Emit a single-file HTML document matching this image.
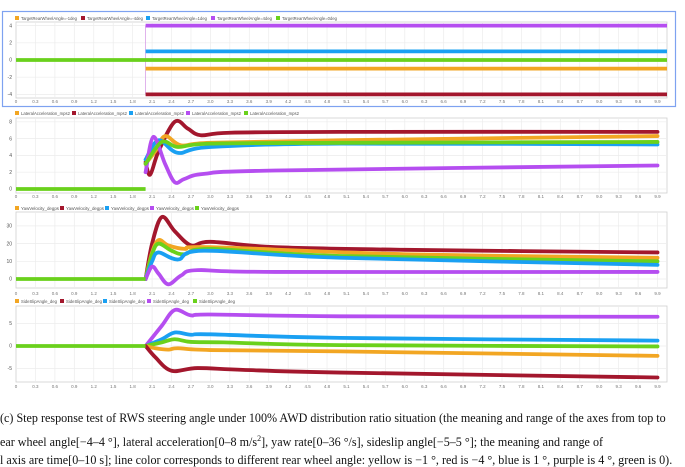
<!DOCTYPE html>
<html><head><meta charset="utf-8">
<style>
body{margin:0;background:#fff;width:685px;height:465px;overflow:hidden;position:relative;font-family:"Liberation Sans",sans-serif}
svg{position:absolute;left:0;top:0}
.cap{position:absolute;left:0;font-family:"Liberation Serif",serif;font-size:12.1px;color:#111;white-space:nowrap;line-height:14px}
</style></head><body>
<svg id="s" width="685" height="400" xmlns="http://www.w3.org/2000/svg">
<rect x="0" y="0" width="685" height="400" fill="#fff"/>
<rect x="2.5" y="11.5" width="673" height="95" fill="none" stroke="#7ea2f0" stroke-width="1.2"/>
<g font-size="4.2" fill="#555" lengthAdjust="spacingAndGlyphs">
<rect x="15" y="16" width="4" height="4" fill="#f2a623"/><text x="21" y="19.8" textLength="56" lengthAdjust="spacingAndGlyphs">TargetRearWheelAngle=-1deg</text>
<rect x="81" y="16" width="4" height="4" fill="#a3172d"/><text x="87" y="19.8" textLength="56" lengthAdjust="spacingAndGlyphs">TargetRearWheelAngle=-4deg</text>
<rect x="146" y="16" width="4" height="4" fill="#1aa0f2"/><text x="152" y="19.8" textLength="55" lengthAdjust="spacingAndGlyphs">TargetRearWheelAngle=1deg</text>
<rect x="211" y="16" width="4" height="4" fill="#b54ef0"/><text x="217" y="19.8" textLength="55" lengthAdjust="spacingAndGlyphs">TargetRearWheelAngle=4deg</text>
<rect x="276" y="16" width="4" height="4" fill="#6ad11c"/><text x="282" y="19.8" textLength="55" lengthAdjust="spacingAndGlyphs">TargetRearWheelAngle=0deg</text>
<rect x="15" y="111" width="4" height="4" fill="#f2a623"/><text x="21" y="114.8" textLength="49" lengthAdjust="spacingAndGlyphs">LateralAcceleration_mps2</text>
<rect x="72" y="111" width="4" height="4" fill="#a3172d"/><text x="78" y="114.8" textLength="49" lengthAdjust="spacingAndGlyphs">LateralAcceleration_mps2</text>
<rect x="129" y="111" width="4" height="4" fill="#1aa0f2"/><text x="135" y="114.8" textLength="49" lengthAdjust="spacingAndGlyphs">LateralAcceleration_mps2</text>
<rect x="186" y="111" width="4" height="4" fill="#b54ef0"/><text x="192" y="114.8" textLength="49" lengthAdjust="spacingAndGlyphs">LateralAcceleration_mps2</text>
<rect x="244" y="111" width="4" height="4" fill="#6ad11c"/><text x="250" y="114.8" textLength="49" lengthAdjust="spacingAndGlyphs">LateralAcceleration_mps2</text>
<rect x="15" y="206" width="4" height="4" fill="#f2a623"/><text x="21" y="209.8" textLength="38" lengthAdjust="spacingAndGlyphs">YawVelocity_degps</text>
<rect x="60" y="206" width="4" height="4" fill="#a3172d"/><text x="66" y="209.8" textLength="38" lengthAdjust="spacingAndGlyphs">YawVelocity_degps</text>
<rect x="105" y="206" width="4" height="4" fill="#1aa0f2"/><text x="111" y="209.8" textLength="38" lengthAdjust="spacingAndGlyphs">YawVelocity_degps</text>
<rect x="150" y="206" width="4" height="4" fill="#b54ef0"/><text x="156" y="209.8" textLength="38" lengthAdjust="spacingAndGlyphs">YawVelocity_degps</text>
<rect x="195" y="206" width="4" height="4" fill="#6ad11c"/><text x="201" y="209.8" textLength="38" lengthAdjust="spacingAndGlyphs">YawVelocity_degps</text>
<rect x="15" y="299" width="4" height="4" fill="#f2a623"/><text x="21" y="302.8" textLength="36" lengthAdjust="spacingAndGlyphs">SideSlipAngle_deg</text>
<rect x="60" y="299" width="4" height="4" fill="#a3172d"/><text x="66" y="302.8" textLength="36" lengthAdjust="spacingAndGlyphs">SideSlipAngle_deg</text>
<rect x="103" y="299" width="4" height="4" fill="#1aa0f2"/><text x="109" y="302.8" textLength="36" lengthAdjust="spacingAndGlyphs">SideSlipAngle_deg</text>
<rect x="147" y="299" width="4" height="4" fill="#b54ef0"/><text x="153" y="302.8" textLength="36" lengthAdjust="spacingAndGlyphs">SideSlipAngle_deg</text>
<rect x="193" y="299" width="4" height="4" fill="#6ad11c"/><text x="199" y="302.8" textLength="36" lengthAdjust="spacingAndGlyphs">SideSlipAngle_deg</text>
</g>
<g id="dyn"></g>
</svg>
<div class="cap" style="top:411px">(c) Step response test of RWS steering angle under 100% AWD distribution ratio situation (the meaning and range of the axes from top to</div>
<div class="cap" style="top:435px">ear wheel angle[−4–4 °], lateral acceleration[0–8 m/s<sup style="font-size:8px;line-height:0">2</sup>], yaw rate[0–36 °/s], sideslip angle[−5–5 °]; the meaning and range of</div>
<div class="cap" style="top:453px">l axis are time[0–10 s]; line color corresponds to different rear wheel angle: yellow is −1 °, red is −4 °, blue is 1 °, purple is 4 °, green is 0).</div>
<script>
var NS="http://www.w3.org/2000/svg",g=document.getElementById("dyn");
function el(n,a,t){var e=document.createElementNS(NS,n);for(var k in a)e.setAttribute(k,a[k]);if(t!=null)e.textContent=t;g.appendChild(e);return e;}
var L=16,R=667;function X(t){return L+t*64.8;}
var C={o:"#f2a623",r:"#a3172d",b:"#1aa0f2",p:"#b54ef0",g:"#6ad11c"};
var W=3.8;
var P=[
 {top:22,bot:98,lab:103,z:60,k:8.6,ticks:[4,2,0,-2,-4]},
 {top:118,bot:193,lab:198,z:189,k:8.4,ticks:[8,6,4,2,0]},
 {top:212,bot:288,lab:295,z:279,k:1.77,ticks:[30,20,10,0]},
 {top:306,bot:382,lab:388,z:346,k:4.5,ticks:[5,0,-5]}];
P.forEach(function(p){
 el("rect",{x:L,y:p.top,width:R-L,height:p.bot-p.top,fill:"#fff",stroke:"#cfcfcf","stroke-width":0.8});
 for(var i=1;i<34;i++){var x=X(i*0.3);el("line",{x1:x,x2:x,y1:p.top,y2:p.bot,stroke:"#ececec","stroke-width":0.7});}
 p.ticks.forEach(function(v){var y=p.z-p.k*v;el("line",{x1:L,x2:R,y1:y,y2:y,stroke:"#ececec","stroke-width":0.7});
  el("text",{x:12,y:y+1.7,"font-size":5,fill:"#555","text-anchor":"end"},String(v));});
 for(var i=0;i<34;i++){var t=(i*0.3).toFixed(1);if(i==0)t="0";el("text",{x:X(i*0.3),y:p.lab,"font-size":4.5,fill:"#777","text-anchor":"middle"},t);}
});
function curve(p,pts,c,w){var d="";
 var q=pts.map(function(a){return [X(a[0]),p.z-p.k*a[1]];});
 d="M"+q[0][0]+","+q[0][1];
 for(var i=0;i<q.length-1;i++){var p0=q[Math.max(i-1,0)],p1=q[i],p2=q[i+1],p3=q[Math.min(i+2,q.length-1)];
  var c1x=p1[0]+(p2[0]-p0[0])/6,c1y=p1[1]+(p2[1]-p0[1])/6,c2x=p2[0]-(p3[0]-p1[0])/6,c2y=p2[1]-(p3[1]-p1[1])/6;
  d+=" C"+c1x+","+c1y+" "+c2x+","+c2y+" "+p2[0]+","+p2[1];}
 el("path",{d:d,fill:"none",stroke:c,"stroke-width":w||W,"stroke-linejoin":"round","stroke-linecap":"round"});}
var p=P[0];
el("line",{x1:X(2),x2:X(2),y1:p.z-p.k*4,y2:p.z+p.k*4,stroke:"#d9a0e8","stroke-width":0.8});
[[4,"p"],[1,"b"],[-1,"o"],[-4,"r"]].forEach(function(a){el("line",{x1:X(2),x2:R,y1:p.z-p.k*a[0],y2:p.z-p.k*a[0],stroke:C[a[1]],"stroke-width":W});});
el("line",{x1:L,x2:R,y1:p.z,y2:p.z,stroke:C.g,"stroke-width":W});
p=P[1];
curve(p,[[2.0,3.2],[2.07,1.7],[2.2,4.5],[2.45,8],[2.65,7.2],[2.85,6.4],[3.3,6.7],[5,6.8],[9.9,6.8]],C.r);
curve(p,[[2.0,3],[2.15,4.5],[2.3,6.3],[2.55,5.2],[3,5.5],[5,5.8],[9.9,6.3]],C.o);
curve(p,[[2.0,3.5],[2.2,5.8],[2.5,4.3],[3,5],[5,5.4],[9.9,5.3]],C.b);
curve(p,[[2.0,2],[2.12,6.2],[2.3,3],[2.45,0.8],[2.6,1.2],[2.9,1.8],[4,2.2],[9.9,2.8]],C.p);
curve(p,[[2.0,3],[2.25,5.6],[2.5,5],[3,5.4],[5,5.5],[9.9,5.6]],C.g);
el("line",{x1:L,x2:X(2),y1:p.z,y2:p.z,stroke:C.g,"stroke-width":W});
p=P[2];
curve(p,[[2.0,0],[2.1,20],[2.25,35],[2.45,27],[2.7,19],[3.0,21],[4,18],[6,16.5],[9.9,15]],C.r);
curve(p,[[2.0,0],[2.1,15],[2.2,22],[2.35,19],[2.6,17],[3,18],[6,14],[9.9,12]],C.o);
curve(p,[[2.0,0],[2.1,14],[2.2,20],[2.4,16],[2.6,14],[3,17],[5,13],[9.9,10]],C.g);
curve(p,[[2.0,0],[2.1,10],[2.2,15],[2.5,11],[2.9,16],[5,12],[9.9,8]],C.b);
curve(p,[[2.0,0],[2.1,7],[2.2,3],[2.35,-3],[2.55,2],[2.8,5],[4,4],[9.9,4]],C.p);
el("line",{x1:L,x2:X(2),y1:p.z,y2:p.z,stroke:C.g,"stroke-width":W});
p=P[3];
curve(p,[[2.0,0],[2.25,4.5],[2.45,8],[2.7,6.8],[3,7],[5,6.6],[9.9,6.5]],C.p);
curve(p,[[2.0,0],[2.25,1.5],[2.45,3],[2.7,2.5],[3,2.6],[5,1.8],[9.9,1.2]],C.b);
curve(p,[[2.0,0],[2.25,0.8],[2.45,1.5],[2.7,0.9],[3.2,0.8],[5,0.2],[9.9,-0.1]],C.g);
curve(p,[[2.0,0],[2.15,-0.5],[2.35,-0.8],[2.5,-0.5],[3,-0.9],[5,-1.2],[9.9,-2.2]],C.o);
curve(p,[[2.0,0],[2.15,-2.5],[2.4,-5.5],[2.8,-4.9],[3.5,-5.3],[5,-5.9],[9.9,-7]],C.r);
el("line",{x1:L,x2:X(2),y1:p.z,y2:p.z,stroke:C.g,"stroke-width":W});
</script>
</body></html>
